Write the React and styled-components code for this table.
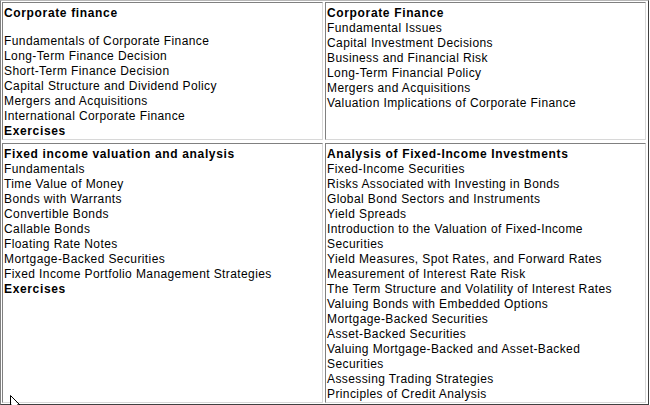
import React from 'react';
import styled, { createGlobalStyle } from 'styled-components';

const GlobalStyle = createGlobalStyle`
  html, body {
    margin: 0;
    padding: 0;
    background: #ffffff;
    overflow: hidden;
  }
`;

const Page = styled.div`
  position: relative;
  width: 650px;
  height: 405px;
  overflow: hidden;
  font-family: 'Liberation Sans', Arial, sans-serif;
  font-size: 12px;
  line-height: 15px;
  letter-spacing: 0.4px;
  color: #000;
`;

const Table = styled.div`
  display: grid;
  grid-template-columns: 321px 321px;
  column-gap: 2px;
  row-gap: 3px;
  padding: 1px 2px 1px 1px;
  width: max-content;
  border-top: 1px solid #b8b8b8;
  border-left: 1px solid #808080;
  border-right: 1px solid #404040;
  border-bottom: 1px solid #404040;
`;

const Cell = styled.div`
  box-sizing: border-box;
  padding: 3px 1px 0 1px;
  border-top: 1px solid #808080;
  border-left: 1px solid #808080;
  border-right: 1px solid #d8d8d8;
  border-bottom: 1px solid #d8d8d8;
`;

const Title = styled.div`
  font-weight: bold;
  letter-spacing: 0.65px;
  white-space: pre;
  margin-bottom: ${(p) => (p.$spaced ? '13px' : '0')};
`;

const Line = styled.div`
  white-space: pre;
  font-weight: ${(p) => (p.$bold ? 'bold' : 'normal')};
  letter-spacing: ${(p) => (p.$bold ? '0.65px' : '0.4px')};
`;

const Cursor = styled.svg`
  position: absolute;
  left: 9px;
  top: 394px;
`;

const sections = [
  {
    title: 'Corporate finance',
    spaced: true,
    items: [
      'Fundamentals of Corporate Finance',
      'Long-Term Finance Decision',
      'Short-Term Finance Decision',
      'Capital Structure and Dividend Policy',
      'Mergers and Acquisitions',
      'International Corporate Finance',
    ],
    exercises: true,
  },
  {
    title: 'Corporate Finance',
    items: [
      'Fundamental Issues',
      'Capital Investment Decisions',
      'Business and Financial Risk',
      'Long-Term Financial Policy',
      'Mergers and Acquisitions',
      'Valuation Implications of Corporate Finance',
    ],
  },
  {
    title: 'Fixed income valuation and analysis',
    items: [
      'Fundamentals',
      'Time Value of Money',
      'Bonds with Warrants',
      'Convertible Bonds',
      'Callable Bonds',
      'Floating Rate Notes',
      'Mortgage-Backed Securities',
      'Fixed Income Portfolio Management Strategies',
    ],
    exercises: true,
  },
  {
    title: 'Analysis of Fixed-Income Investments',
    items: [
      'Fixed-Income Securities',
      'Risks Associated with Investing in Bonds',
      'Global Bond Sectors and Instruments',
      'Yield Spreads',
      'Introduction to the Valuation of Fixed-Income\nSecurities',
      'Yield Measures, Spot Rates, and Forward Rates',
      'Measurement of Interest Rate Risk',
      'The Term Structure and Volatility of Interest Rates',
      'Valuing Bonds with Embedded Options',
      'Mortgage-Backed Securities',
      'Asset-Backed Securities',
      'Valuing Mortgage-Backed and Asset-Backed\nSecurities',
      'Assessing Trading Strategies',
      'Principles of Credit Analysis',
    ],
  },
];

const App = () => {
  return (
    <Page>
      <GlobalStyle />
      <Table>
        {sections.map((s) => (
          <Cell key={s.title + s.items[0]}>
            <Title $spaced={s.spaced}>{s.title}</Title>
            {s.items.map((item) => (
              <Line key={item}>{item}</Line>
            ))}
            {s.exercises && <Line $bold>Exercises</Line>}
          </Cell>
        ))}
      </Table>
      {/* mouse pointer caught in the screenshot */}
      <Cursor width="14" height="14" viewBox="0 0 14 14">
        <path d="M1.5 1.5 L1.5 14 M1.5 1.5 L12.5 12.5" stroke="#000" strokeWidth="1" fill="none" />
        <path d="M2.5 3 L2.5 14 L11 14 Z" fill="#fff" />
      </Cursor>
    </Page>
  );
};

export default App;
